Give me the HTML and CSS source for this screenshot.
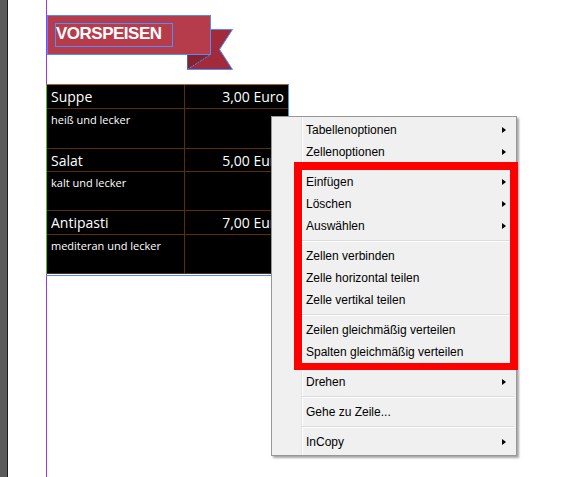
FILE: index.html
```html
<!DOCTYPE html>
<html lang="de">
<head>
<meta charset="utf-8">
<title>Tabelle – Kontextmenü</title>
<link rel="stylesheet" href="styles.css">
</head>
<body>
<div class="app">
  <div class="rail"></div>
  <div class="page">
    <div class="banner">
      <svg class="banner-shape" width="187" height="55" viewBox="0 0 187 55">
        <polygon points="140.5,14.5 185.5,14.5 172.5,34.5 185.5,54.5 140.5,54.5" fill="#a22b3b" stroke="#4d8ffd" stroke-width="1"/>
        <polygon points="140.5,39.5 163.5,39.5 140.5,54.5" fill="#87222f"/>
        <line x1="140.5" y1="54.5" x2="163.5" y2="39.5" stroke="#4d8ffd" stroke-width="1" stroke-dasharray="2 1"/>
        <rect x="0.5" y="0.5" width="163" height="39" fill="#b73c4b" stroke="#4d8ffd" stroke-width="1"/>
      </svg>
      <div class="banner-frame"><span class="banner-text">VORSPEISEN</span></div>
    </div>
    <div class="table-frame">
      <div class="menu-table">
        <div class="cell name">Suppe</div>
        <div class="cell name price">3,00 Euro</div>
        <div class="cell desc">heiß und lecker</div>
        <div class="cell desc"></div>
        <div class="cell name">Salat</div>
        <div class="cell name price">5,00 Euro</div>
        <div class="cell desc">kalt und lecker</div>
        <div class="cell desc"></div>
        <div class="cell name">Antipasti</div>
        <div class="cell name price">7,00 Euro</div>
        <div class="cell desc">mediteran und lecker</div>
        <div class="cell desc"></div>
      </div>
    </div>
  </div>

  <div class="context-menu">
    <div class="item sub">Tabellenoptionen</div>
    <div class="item sub">Zellenoptionen</div>
    <div class="sep"></div>
    <div class="item sub">Einfügen</div>
    <div class="item sub">Löschen</div>
    <div class="item sub">Auswählen</div>
    <div class="sep"></div>
    <div class="item">Zellen verbinden</div>
    <div class="item">Zelle horizontal teilen</div>
    <div class="item">Zelle vertikal teilen</div>
    <div class="sep"></div>
    <div class="item">Zeilen gleichmäßig verteilen</div>
    <div class="item">Spalten gleichmäßig verteilen</div>
    <div class="sep"></div>
    <div class="item sub">Drehen</div>
    <div class="sep"></div>
    <div class="item">Gehe zu Zeile...</div>
    <div class="sep"></div>
    <div class="item sub">InCopy</div>
  </div>
  <div class="highlight"></div>
</div>
</body>
</html>
```

FILE: styles.css
```css
* { box-sizing: border-box; }

html, body {
  margin: 0;
  padding: 0;
  background: #ffffff;
}

.app {
  position: relative;
  display: flex;
  width: 567px;
  height: 477px;
  overflow: hidden;
  background: #ffffff;
}

.rail {
  width: 8px;
  flex: none;
  background: #5b5b5b;
  border-right: 1px solid #1e1e1e;
}

.page {
  margin-left: 38px;
  border-left: 1px solid #a033ff;
  flex: 1;
  display: flex;
  flex-direction: column;
  align-items: flex-start;
  padding-top: 15px;
}

/* Banner */
.banner {
  display: grid;
}
.banner > * {
  grid-area: 1 / 1;
}
.banner-shape {
  display: block;
}
.banner-frame {
  margin: 8px 0 0 8px;
  width: 118px;
  height: 24px;
  border: 1px solid #4d8ffd;
  align-self: start;
  justify-self: start;
}
.banner-text {
  display: block;
  font-family: "Liberation Sans", Arial, sans-serif;
  font-weight: bold;
  font-size: 17px;
  line-height: 20px;
  letter-spacing: -0.5px;
  color: #ffffff;
  white-space: nowrap;
}

/* Table */
.table-frame {
  margin-top: 14px;
  margin-left: -1px;
  border-right: 1px solid #4d8ffd;
  border-bottom: 1px solid #4d8ffd;
  padding-bottom: 1px;
}
.menu-table {
  display: grid;
  grid-template-columns: 138px 103px;
  grid-template-rows: 24px 40px 23px 39px 24px 39px;
  background: #000000;
  border-left: 1px solid #5cbf00;
  border-top: 1px solid #b06800;
  font-family: "Open Sans", "Liberation Sans", sans-serif;
  color: #ffffff;
}
.cell {
  border-bottom: 1px solid #5a3000;
  padding: 3px 4px 0 4px;
  white-space: nowrap;
  overflow: hidden;
}
.cell:nth-child(odd) {
  border-right: 1px solid #5a3000;
}
.name {
  font-size: 14px;
  line-height: 18px;
}
.price {
  text-align: right;
  padding-right: 4px;
}
.desc {
  font-size: 11px;
  line-height: 15px;
}

/* Context menu */
.context-menu {
  position: absolute;
  left: 271px;
  top: 116px;
  width: 246px;
  padding: 2px;
  border: 1px solid #979797;
  background:
    linear-gradient(to right,
      transparent 29px, #e2e3e3 29px, #e2e3e3 30px,
      #ffffff 30px, #ffffff 31px, transparent 31px),
    #f0f0f0;
  box-shadow: 2px 2px 2px rgba(0, 0, 0, 0.35);
  font-family: "Liberation Sans", Arial, sans-serif;
  font-size: 12px;
  color: #000000;
}
.item {
  display: flex;
  align-items: center;
  justify-content: space-between;
  height: 22px;
  line-height: 20px;
  padding-left: 32px;
  padding-right: 8px;
  padding-bottom: 1px;
  white-space: nowrap;
}
.item.sub::after {
  content: "";
  width: 0;
  height: 0;
  border-left: 4px solid #000000;
  border-top: 3.5px solid transparent;
  border-bottom: 3.5px solid transparent;
}
.sep {
  height: 0;
  margin: 3px 0 3px 28px;
  border-top: 1px solid #dcdcdc;
  border-bottom: 1px solid #ffffff;
}

.highlight {
  position: absolute;
  left: 294px;
  top: 162px;
  width: 224px;
  height: 208px;
  border: 8px solid #ff0000;
  border-bottom-width: 7px;
}
```
